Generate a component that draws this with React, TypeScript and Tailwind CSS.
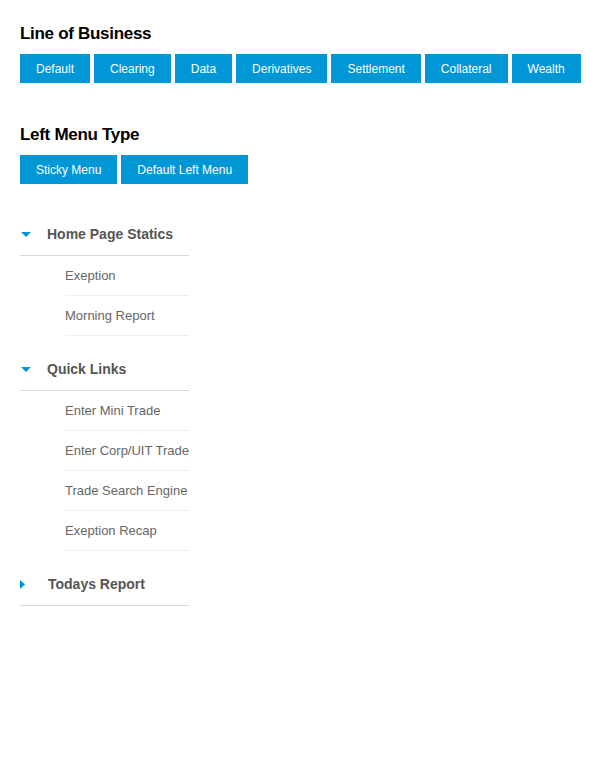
const lobButtons = [
  "Default",
  "Clearing",
  "Data",
  "Derivatives",
  "Settlement",
  "Collateral",
  "Wealth",
];

const menuTypes = ["Sticky Menu", "Default Left Menu"];

type Section = {
  title: string;
  open: boolean;
  items: string[];
};

const sections: Section[] = [
  { title: "Home Page Statics", open: true, items: ["Exeption", "Morning Report"] },
  {
    title: "Quick Links",
    open: true,
    items: ["Enter Mini Trade", "Enter Corp/UIT Trade", "Trade Search Engine", "Exeption Recap"],
  },
  { title: "Todays Report", open: false, items: [] },
];

function BlueButton({ label }: { label: string }) {
  return (
    <button
      type="button"
      className="flex h-[29px] items-center bg-[#0097d6] px-4 text-[12px] text-white"
    >
      {label}
    </button>
  );
}

function Caret({ open }: { open: boolean }) {
  return open ? (
    <svg width="10" height="5" viewBox="0 0 10 5" className="ml-[1px]">
      <path d="M0 0 L10 0 L5 5 Z" fill="#0097d6" />
    </svg>
  ) : (
    <svg width="5" height="9" viewBox="0 0 5 9">
      <path d="M0 0 L5 4.5 L0 9 Z" fill="#0097d6" />
    </svg>
  );
}

export default function App() {
  return (
    <div
      className="min-h-[758px] bg-white px-5 pt-[24px]"
      style={{ fontFamily: '"Liberation Sans", Arial, sans-serif' }}
    >
      <h2 className="mb-[10px] h-[20px] text-[17px] font-bold leading-[20px] tracking-[-0.3px] text-black">
        Line of Business
      </h2>
      <div className="flex gap-1">
        {lobButtons.map((b) => (
          <BlueButton key={b} label={b} />
        ))}
      </div>

      <h2 className="mb-[10px] mt-[42px] h-[20px] text-[17px] font-bold leading-[20px] tracking-[-0.3px] text-black">
        Left Menu Type
      </h2>
      <div className="flex gap-1">
        {menuTypes.map((b) => (
          <BlueButton key={b} label={b} />
        ))}
      </div>

      <div className="mt-[29px] w-[169px]">
        {sections.map((s, i) => (
          <div key={s.title} className={i > 0 ? "mt-[12px]" : ""}>
            <div className="flex h-[43px] items-center border-b border-[#d9d9d9]">
              <div className="flex w-[27px] items-center">
                <Caret open={s.open} />
              </div>
              <span className={`text-[14px] font-bold text-[#555] ${s.open ? "" : "ml-[1px]"}`}>
                {s.title}
              </span>
            </div>
            {s.open && (
              <ul className="pl-[45px]">
                {s.items.map((it) => (
                  <li
                    key={it}
                    className="flex h-[40px] items-center whitespace-nowrap border-b border-[#eeeeee] text-[13px] text-[#666]"
                  >
                    {it}
                  </li>
                ))}
              </ul>
            )}
          </div>
        ))}
      </div>
    </div>
  );
}
